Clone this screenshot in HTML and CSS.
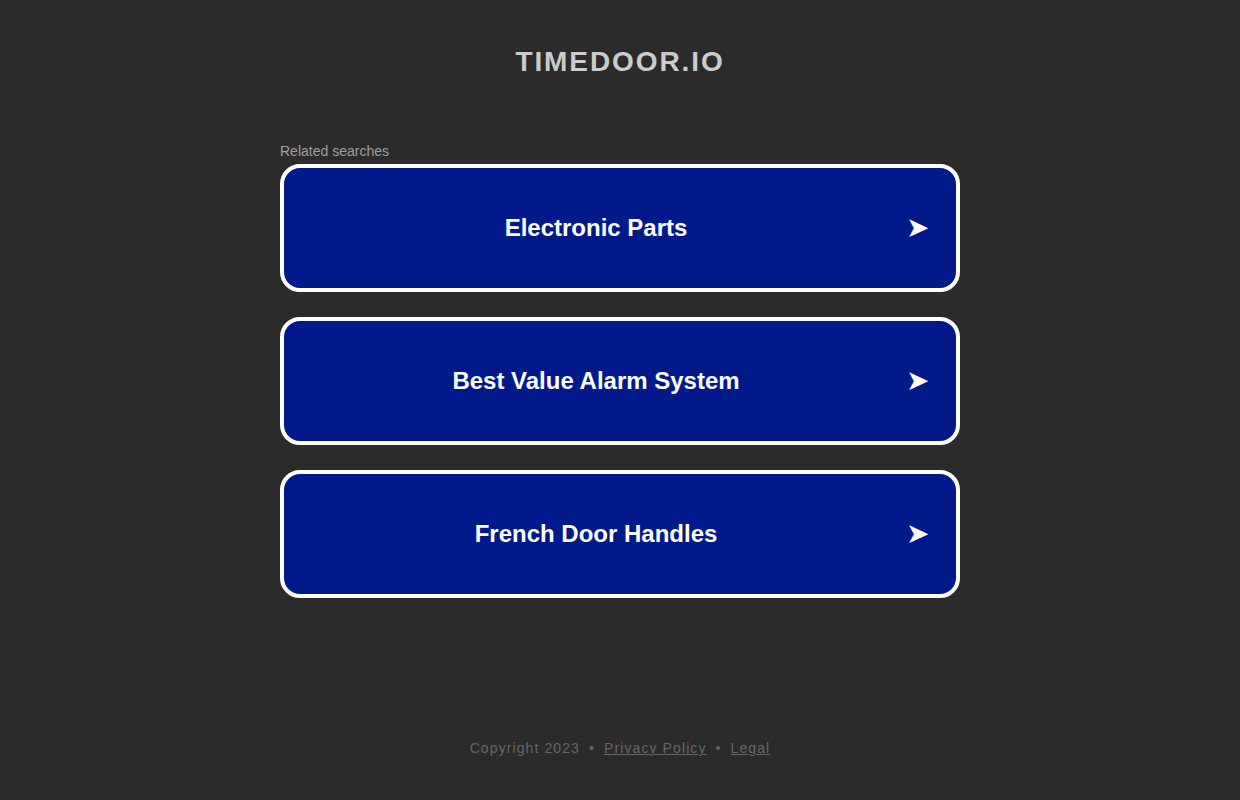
FILE: index.html
```html
<!DOCTYPE html>
<html lang="en">
<head>
<meta charset="utf-8">
<title>timedoor.io</title>
<link rel="stylesheet" href="styles.css">
</head>
<body>
<div class="page">
  <header class="header">
    <h1 class="title">TIMEDOOR.IO</h1>
  </header>
  <main class="main">
    <div class="related">Related searches</div>
    <div class="cards">
      <a class="card" href="#"><span class="card-text">Electronic Parts</span><span class="card-arrow">➤</span></a>
      <a class="card" href="#"><span class="card-text">Best Value Alarm System</span><span class="card-arrow">➤</span></a>
      <a class="card" href="#"><span class="card-text">French Door Handles</span><span class="card-arrow">➤</span></a>
    </div>
  </main>
  <footer class="footer">
    <span>Copyright 2023</span><span class="dot">•</span><a href="#" class="flink">Privacy Policy</a><span class="dot">•</span><a href="#" class="flink">Legal</a>
  </footer>
</div>
</body>
</html>
```

FILE: styles.css
```css
html, body {
  margin: 0;
  padding: 0;
  background: #2b2b2b;
  font-family: "Liberation Sans", Arial, sans-serif;
}
.page {
  width: 1240px;
  height: 800px;
  display: flex;
  flex-direction: column;
  align-items: center;
}
.header {
  padding-top: 44px;
  height: 100px;
  box-sizing: border-box;
}
.title {
  margin: 0;
  font-size: 28px;
  line-height: 36px;
  font-weight: bold;
  color: #cccccc;
  letter-spacing: 1.9px;
}
.main {
  width: 680px;
  padding-top: 42px;
}
.related {
  font-size: 14px;
  line-height: 18px;
  color: #a0a0a0;
  margin-bottom: 4px;
}
.cards {
  display: flex;
  flex-direction: column;
  gap: 25px;
}
.card {
  display: flex;
  align-items: center;
  height: 128px;
  box-sizing: border-box;
  padding-left: 2px;
  border: 4px solid #ffffff;
  border-radius: 20px;
  background: #011a8b;
  color: #ffffff;
  text-decoration: none;
}
.card-text {
  flex: 1;
  text-align: center;
  font-size: 24px;
  font-weight: bold;
}
.card-arrow {
  width: 20px;
  margin-right: 30px;
  text-align: center;
  font-size: 28px;
  line-height: 28px;
  font-family: "DejaVu Sans", sans-serif;
}
.footer {
  margin-top: auto;
  margin-bottom: 44px;
  font-size: 14px;
  line-height: 16px;
  letter-spacing: 1.1px;
  color: #666666;
}
.dot {
  margin: 0 9px;
}
.flink {
  color: #666666;
  text-decoration: underline;
}
```
